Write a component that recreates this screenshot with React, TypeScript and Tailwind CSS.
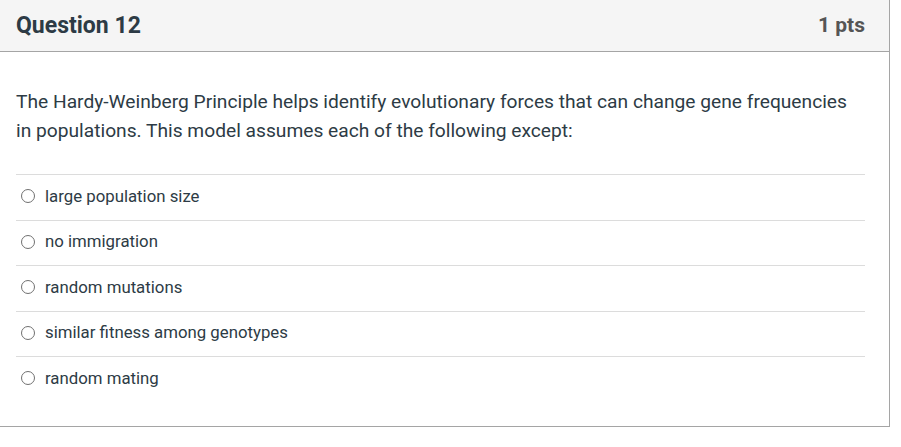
import { useState } from "react";

const answers = [
  "large population size",
  "no immigration",
  "random mutations",
  "similar fitness among genotypes",
  "random mating",
];

const Radio = ({ checked }: { checked: boolean }) => (
  <span className="w-[14px] h-[14px] rounded-full border border-[#707070] bg-white shrink-0 flex items-center justify-center">
    {checked && <span className="w-[8px] h-[8px] rounded-full bg-[#2d3b45]" />}
  </span>
);

export default function App() {
  const [picked, setPicked] = useState<number | null>(null);

  return (
    <div className="w-[901px] h-[447px] bg-white font-['Roboto',sans-serif] text-[#2d3b45]">
      <div className="w-[890px] border-r border-b border-[#a5a5a5]">
        {/* header */}
        <div className="h-[52px] bg-[#f5f5f5] border-b border-[#a5a5a5] flex items-center justify-between pl-4 pr-6">
          <h2 className="text-[23px] font-bold leading-none">Question 12</h2>
          <span className="text-[21px] font-bold text-[#555] leading-none">1 pts</span>
        </div>

        <div className="pl-4 pr-6 pt-[35px] pb-[24px]">
          <p className="text-[19.2px] leading-[29px]">
            The Hardy-Weinberg Principle helps identify evolutionary forces that can change gene frequencies in
            populations. This model assumes each of the following except:
          </p>

          <div className="mt-[29px]">
            {answers.map((a, i) => (
              <label
                key={a}
                onClick={() => setPicked(i)}
                className="h-[45.5px] border-t border-[#dcdcdc] flex items-center gap-[10px] pl-[5px] pb-[2px] cursor-pointer text-[16.8px]"
              >
                <Radio checked={picked === i} />
                <span>{a}</span>
              </label>
            ))}
          </div>
        </div>
      </div>
    </div>
  );
}
